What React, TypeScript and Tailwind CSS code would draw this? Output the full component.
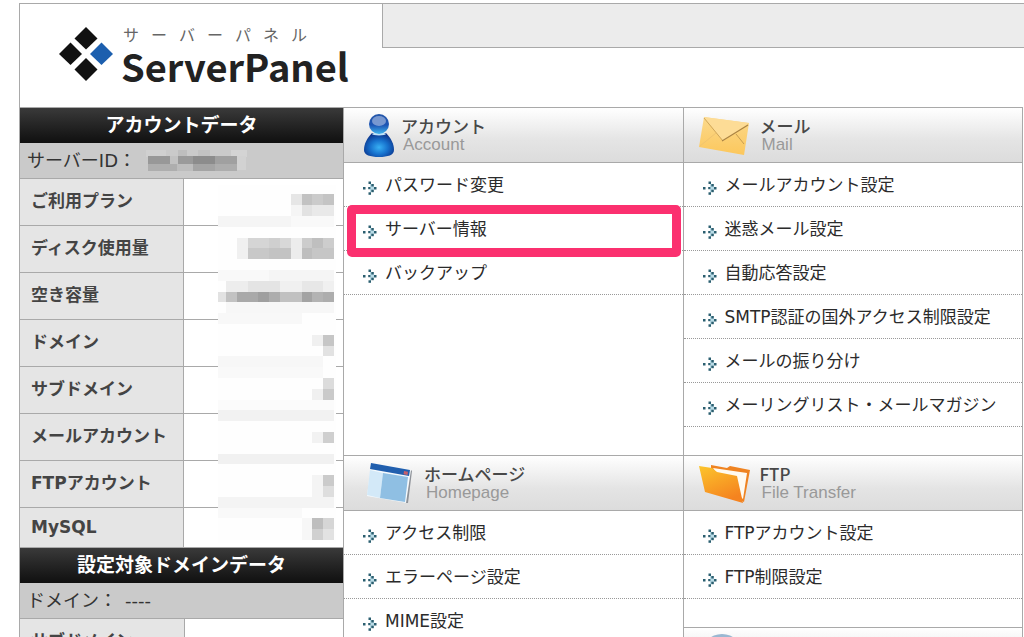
import type { ReactNode } from 'react'
import { clsx } from 'clsx'

interface MenuItem {
  label: string
  highlighted?: boolean
}

const logoKana = ['サ', 'ー', 'バ', 'ー', 'パ', 'ネ', 'ル']

const accountRows = [
  'ご利用プラン',
  'ディスク使用量',
  '空き容量',
  'ドメイン',
  'サブドメイン',
  'メールアカウント',
  'FTPアカウント',
  'MySQL',
]

const accountMenu: MenuItem[] = [
  { label: 'パスワード変更' },
  { label: 'サーバー情報', highlighted: true },
  { label: 'バックアップ' },
]

const mailMenu: MenuItem[] = [
  { label: 'メールアカウント設定' },
  { label: '迷惑メール設定' },
  { label: '自動応答設定' },
  { label: 'SMTP認証の国外アクセス制限設定' },
  { label: 'メールの振り分け' },
  { label: 'メーリングリスト・メールマガジン' },
]

const homepageMenu: MenuItem[] = [
  { label: 'アクセス制限' },
  { label: 'エラーページ設定' },
  { label: 'MIME設定' },
]

const ftpMenu: MenuItem[] = [{ label: 'FTPアカウント設定' }, { label: 'FTP制限設定' }]

// masked values: [column from the right, row, columns, rows, colour]
const maskCells: [number, number, number, number, string][] = [
  [11, 3, 7, 1, '#f5f5f5'], [4, 3, 4, 1, '#f9f9f9'],
  [4, 1, 1, 1, '#e6e6e6'], [3, 1, 1, 1, '#c2c2c2'], [2, 1, 1, 1, '#cbcbcb'], [1, 1, 1, 1, '#c4c4c4'],
  [4, 2, 1, 1, '#f5f5f5'], [3, 2, 1, 1, '#e2e2e2'], [2, 2, 2, 1, '#e9e9e9'],
  [9, 5, 1, 2, '#f0f0f0'], [8, 5, 2, 1, '#d5d5d5'], [6, 5, 1, 1, '#cfcfcf'], [5, 5, 1, 1, '#d8d8d8'],
  [4, 5, 1, 2, '#ececec'], [3, 5, 1, 1, '#cccccc'], [2, 5, 1, 1, '#bfbfbf'], [1, 5, 1, 1, '#cdcdcd'],
  [8, 6, 2, 1, '#c8c8c8'], [6, 6, 2, 1, '#c3c3c3'], [3, 6, 1, 1, '#bebebe'], [2, 6, 2, 1, '#c6c6c6'],
  [11, 8, 5, 1, '#f9f9f9'], [6, 8, 6, 1, '#f5f5f5'],
  [10, 9, 2, 1, '#ededed'], [8, 9, 3, 1, '#e4e4e4'], [5, 9, 2, 1, '#f0f0f0'], [3, 9, 2, 1, '#e7e7e7'], [1, 9, 1, 1, '#f0f0f0'],
  [11, 10, 1, 1, '#e2e2e2'], [10, 10, 1, 1, '#c2c2c2'], [9, 10, 2, 1, '#a9a9a9'], [7, 10, 1, 1, '#9f9f9f'], [6, 10, 1, 1, '#adadad'],
  [5, 10, 2, 1, '#c1c1c1'], [3, 10, 1, 1, '#a3a3a3'], [2, 10, 1, 1, '#b3b3b3'], [1, 10, 1, 1, '#adadad'],
  [10, 11, 10, 1, '#f7f7f7'], [11, 12, 8, 1, '#f8f8f8'],
  [2, 14, 1, 1, '#f0f0f0'], [1, 14, 1, 1, '#c6c6c6'], [1, 15, 1, 1, '#e2e2e2'],
  [11, 16, 10, 1, '#f7f7f7'], [11, 17, 10, 1, '#f9f9f9'],
  [1, 18, 1, 1, '#dcdcdc'], [2, 19, 1, 1, '#f0f0f0'], [1, 19, 1, 1, '#cacaca'],
  [11, 20, 11, 1, '#fbfbfb'], [11, 21, 11, 1, '#f2f2f2'],
  [2, 23, 1, 1, '#f2f2f2'], [1, 23, 1, 1, '#cfcfcf'],
  [11, 25, 11, 1, '#f1f1f1'],
  [2, 27, 1, 2, '#f4f4f4'], [1, 27, 1, 1, '#cbcbcb'], [1, 28, 1, 1, '#dedede'],
  [11, 29, 11, 1, '#f4f4f4'], [11, 30, 8, 1, '#f9f9f9'],
  [3, 31, 1, 2, '#f7f7f7'], [2, 31, 1, 1, '#bebebe'], [1, 31, 1, 1, '#d6d6d6'], [2, 32, 1, 1, '#d0d0d0'], [1, 32, 1, 1, '#e2e2e2'],
]

const CELL = 10.8

function MaskedValues() {
  return (
    <svg className="absolute right-[7px] top-[6px]" width="118" height="358" viewBox="0 0 118 358" shapeRendering="crispEdges" aria-hidden="true">
      <rect width="118" height="358" fill="#fefefe" />
      {maskCells.map(([col, row, w, h, fill], i) => (
        <rect key={i} x={116 - col * CELL} y={row * CELL - 1.5} width={w * CELL} height={h * CELL} fill={fill} />
      ))}
    </svg>
  )
}

function MaskedId() {
  return (
    <svg width="104" height="24" viewBox="0 0 104 24" shapeRendering="crispEdges" aria-hidden="true">
      <rect x="2" y="1" width="20" height="7" fill="#d0d0d0" />
      <rect x="34" y="1" width="9" height="7" fill="#bebebe" />
      <rect x="54" y="1" width="12" height="7" fill="#c2c2c2" />
      <rect x="87" y="1" width="16" height="7" fill="#d4d4d4" />
      <rect x="4" y="7" width="22" height="8" fill="#989898" />
      <rect x="26" y="7" width="8" height="8" fill="#c2c2c2" />
      <rect x="34" y="7" width="15" height="8" fill="#9a9a9a" />
      <rect x="49" y="7" width="22" height="8" fill="#8c8c8c" />
      <rect x="71" y="7" width="22" height="8" fill="#a0a0a0" />
      <rect x="93" y="7" width="9" height="14" fill="#d2d2d2" />
      <rect x="4" y="15" width="29" height="7" fill="#aeaeae" />
      <rect x="33" y="15" width="16" height="7" fill="#bdbdbd" />
      <rect x="49" y="15" width="22" height="7" fill="#a4a4a4" />
      <rect x="71" y="15" width="22" height="7" fill="#adadad" />
    </svg>
  )
}

function LogoMark() {
  return (
    <svg width="54" height="54" viewBox="0 0 54 54" aria-hidden="true">
      <path d="M27 0 38.500 11.500 27 22.500 15.500 11.500Z" fill="#111" />
      <path d="M11.500 15.500 23 27 11.500 38 0 27Z" fill="#111" />
      <path d="M42.500 15.500 54 27 42.500 38 31 27Z" fill="#1c5fae" />
      <path d="M27 31 38.500 42.500 27 54 15.500 42.500Z" fill="#111" />
    </svg>
  )
}

function ArrowDots() {
  return (
    <svg className="mt-[6px] shrink-0" width="14" height="14" viewBox="0 0 14 14" aria-hidden="true">
      <path d="M7 2 12.500 7 7 12Z" fill="#b9dbe6" />
      <g fill="#2b5f70">
        <rect x="0" y="6" width="2.500" height="2.500" />
        <rect x="5.500" y="0.500" width="2.500" height="2.500" />
        <rect x="8.300" y="3" width="2.500" height="2.500" />
        <rect x="5.200" y="6" width="2.200" height="2.200" />
        <rect x="11" y="6" width="2.500" height="2.500" />
        <rect x="8.300" y="8.700" width="2.500" height="2.500" />
        <rect x="5.500" y="11.300" width="2.500" height="2.500" />
      </g>
    </svg>
  )
}

function PersonIcon() {
  return (
    <svg width="32" height="44" viewBox="0 0 32 44" aria-hidden="true">
      <defs>
        <radialGradient id="body" cx="0.5" cy="0.6" r="0.6">
          <stop offset="0" stopColor="#38b0f4" />
          <stop offset="0.500" stopColor="#1670cc" />
          <stop offset="1" stopColor="#0b2f86" />
        </radialGradient>
        <linearGradient id="head" x1="0" y1="0" x2="0" y2="1">
          <stop offset="0" stopColor="#2456a8" />
          <stop offset="0.550" stopColor="#1d55b4" />
          <stop offset="1" stopColor="#3fb4ee" />
        </linearGradient>
      </defs>
      <path d="M8 20C3 25 0 31 0 37c0 5 6 7 15 7s15-2 15-7c0-6-3-12-8-17Z" fill="url(#body)" />
      <ellipse cx="15" cy="21" rx="7" ry="1.500" fill="#bfe3f8" />
      <circle cx="15" cy="11" r="10" fill="url(#head)" />
      <ellipse cx="15" cy="8" rx="7" ry="5" fill="#8fa9d8" opacity="0.800" />
    </svg>
  )
}

function EnvelopeIcon() {
  return (
    <svg width="52" height="40" viewBox="0 0 52 40" aria-hidden="true">
      <defs>
        <linearGradient id="paper" x1="0" y1="0" x2="0" y2="1">
          <stop offset="0" stopColor="#fbd98b" />
          <stop offset="1" stopColor="#fcc75c" />
        </linearGradient>
      </defs>
      <path d="M5 2 50 8 45 40 0 32Z" fill="url(#paper)" />
      <path d="M5 2 24 26 50 8Z" fill="#fddc96" />
      <path d="M5 3 24 26" fill="none" stroke="#cfa65a" strokeWidth="1" />
      <path d="M23 26 49 10" fill="none" stroke="#ab8343" strokeWidth="1.300" />
      <path d="M37 19 45 29" fill="none" stroke="#c79c50" strokeWidth="1" />
      <path d="M17 18 1 31" fill="none" stroke="#f0c470" strokeWidth="1" />
    </svg>
  )
}

function WindowIcon() {
  return (
    <svg width="46" height="42" viewBox="0 0 46 42" aria-hidden="true">
      <path d="M4 1 44 8 40 41 0 34Z" fill="#f5fafd" />
      <path d="M44 8 45 9 41 41 39 41Z" fill="#8e9298" />
      <path d="M4 1 43 8 42 14 3 7Z" fill="#215fae" />
      <path d="M37 9 41 9.700 40.500 13 36.500 12.300Z" fill="#c8606a" />
      <path d="M3 8 16 11 13 36 0 33Z" fill="#d3e9f8" />
      <path d="M16 11 41 15 38 40 13 36Z" fill="#8fbfe3" />
    </svg>
  )
}

function FolderIcon() {
  return (
    <svg width="52" height="40" viewBox="0 0 52 40" aria-hidden="true">
      <defs>
        <linearGradient id="folder" x1="0" y1="0" x2="0.5" y2="1">
          <stop offset="0" stopColor="#fcc52c" />
          <stop offset="1" stopColor="#f5831f" />
        </linearGradient>
      </defs>
      <path d="M12 2 28 5 31 3 51 7 45 39 12 21Z" fill="#ef8321" />
      <path d="M14 5 48 10 44 36 22 17Z" fill="#fffaf0" />
      <path d="M0 3 13 5 18 9 38 13 44 40 6 29Z" fill="url(#folder)" />
    </svg>
  )
}

function GlobeIcon() {
  return (
    <svg width="46" height="44" viewBox="0 0 46 44" aria-hidden="true">
      <circle cx="23" cy="22" r="21" fill="#9ab8d2" />
    </svg>
  )
}

interface SectionProps {
  title?: string
  subtitle?: string
  icon: ReactNode
  iconSlot?: string
  items?: MenuItem[]
}

function Section({ title, subtitle, icon, iconSlot = 'w-[76px] pl-[15px]', items = [] }: SectionProps) {
  return (
    <section className="pb-7">
      <div className="flex h-14 items-center border-y border-[#a9a9a9] bg-linear-to-b from-white from-0% via-[#e4e4e4] via-60% to-[#dcdcdc]">
        <div className={clsx('flex shrink-0', iconSlot)}>{icon}</div>
        {title && (
          <div>
            <h2 className="font-['Noto_Sans_CJK_JP',sans-serif] text-[17px]/[20px] font-medium text-[#484848]">{title}</h2>
            <p className="pl-[2px] font-['Liberation_Sans',sans-serif] text-[17px]/[18px] text-[#999]">{subtitle}</p>
          </div>
        )}
      </div>
      <ul>
        {items.map((item) => (
          <li key={item.label} className="relative border-b border-dotted border-[#999]">
            <a href="#" className="flex h-[43px] items-center gap-2 pl-[19px] text-[17px]/[24px] text-[#2b2b2b]">
              <ArrowDots />
              {item.label}
            </a>
            {item.highlighted && (
              <div className="pointer-events-none absolute -bottom-[7px] -top-[2px] left-[3px] right-[2px] rounded-[5px] border-[9px] border-[#fb306f]" />
            )}
          </li>
        ))}
      </ul>
    </section>
  )
}

function PanelTitle({ children }: { children: ReactNode }) {
  return (
    <h2 className="bg-linear-to-b from-[#3a3a3a] to-[#101010] text-center text-[19px]/[35px] font-bold text-white">
      {children}
    </h2>
  )
}

function Sidebar() {
  return (
    <aside className="w-[323px] shrink-0 border-t border-[#a9a9a9]">
      <PanelTitle>アカウントデータ</PanelTitle>
      <div className="flex h-9 items-center gap-2 border-b border-[#a9a9a9] bg-[#cacaca] pl-[7px] text-[18px]/[24px] text-[#333]">
        <span>サーバーID：</span>
        <MaskedId />
      </div>
      <div className="relative">
        <table className="w-full table-fixed border-separate border-spacing-0">
          <tbody>
            {accountRows.map((label, i) => (
              <tr key={label} className={i === accountRows.length - 1 ? 'h-10' : 'h-[47px]'}>
                <th scope="row" className="w-[163px] border-b border-[#a9a9a9] bg-[#e5e5e5] p-0 pb-[2px] pl-[11px] text-left text-[17px]/[24px] font-bold text-[#444]">
                  {label}
                </th>
                <td className="border-b border-l border-[#a9a9a9] p-0" />
              </tr>
            ))}
          </tbody>
        </table>
        <MaskedValues />
      </div>
      <PanelTitle>設定対象ドメインデータ</PanelTitle>
      <p className="flex h-9 items-center gap-2 border-b border-[#a9a9a9] bg-[#cacaca] pl-[7px] text-[18px]/[24px] text-[#333]">
        <span>ドメイン：</span>
        <span>----</span>
      </p>
      <table className="w-full table-fixed border-separate border-spacing-0">
        <tbody>
          <tr className="h-[47px]">
            <th scope="row" className="w-[164px] border-b border-[#a9a9a9] bg-[#e5e5e5] p-0 pb-[2px] pl-[11px] text-left text-[17px]/[24px] font-bold text-[#444]">
              サブドメイン
            </th>
            <td className="border-b border-l border-[#a9a9a9] p-0" />
          </tr>
        </tbody>
      </table>
    </aside>
  )
}

export default function App() {
  return (
    <div className="h-screen overflow-hidden bg-white pl-[19px] pt-[3px] font-['DejaVu_Sans','Noto_Sans_CJK_JP',sans-serif]">
      <div className="border-l border-t border-[#a9a9a9]">
        <header className="flex h-[103px] items-start">
          <div className="flex w-[362px] shrink-0 items-center gap-2 pl-[39px] pt-5">
            <LogoMark />
            <div>
              <div className="flex gap-3 pl-[2px] text-[16px]/[24px] text-[#666]">
                {logoKana.map((char, i) => (
                  <span key={i}>{char}</span>
                ))}
              </div>
              <h1 className="font-['Noto_Sans_CJK_JP',sans-serif] text-[38px]/[36px] font-bold text-[#222]">ServerPanel</h1>
            </div>
          </div>
          <div className="h-11 flex-1 border-b border-l border-[#a9a9a9] bg-[#ececec]" />
        </header>

        <div className="flex">
          <Sidebar />
          <main className="mr-px min-w-0 flex-1 border-r border-[#a9a9a9]">
            <div className="grid grid-cols-2">
              <div className="border-l border-[#a9a9a9]">
                <Section title="アカウント" subtitle="Account" icon={<PersonIcon />} iconSlot="w-[57px] pl-5" items={accountMenu} />
              </div>
              <div className="border-l border-[#a9a9a9]">
                <Section title="メール" subtitle="Mail" icon={<EnvelopeIcon />} items={mailMenu} />
              </div>
            </div>
            <div className="grid grid-cols-2">
              <div className="border-l border-[#a9a9a9]">
                <Section title="ホームページ" subtitle="Homepage" icon={<WindowIcon />} iconSlot="w-20 pl-[23px]" items={homepageMenu} />
              </div>
              <div className="border-l border-[#a9a9a9]">
                <Section title="FTP" subtitle="File Transfer" icon={<FolderIcon />} items={ftpMenu} />
                <Section icon={<GlobeIcon />} />
              </div>
            </div>
          </main>
        </div>
      </div>
    </div>
  )
}
